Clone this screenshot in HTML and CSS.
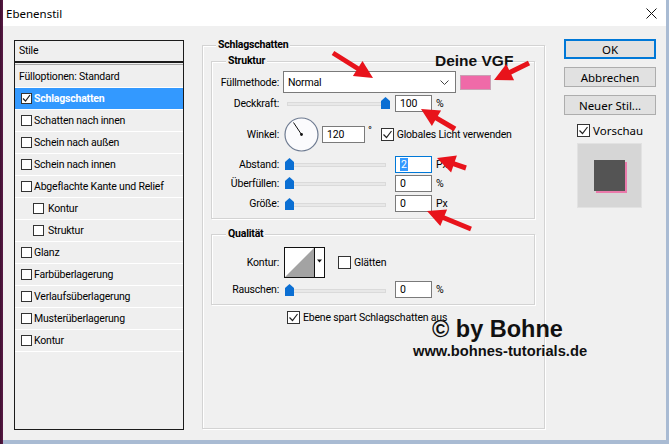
FILE: index.html
```html
<!DOCTYPE html>
<html lang="de">
<head>
  <meta charset="UTF-8" />
  <title>Ebenenstil</title>
  <link rel="stylesheet" href="styles.css">
</head>
<body>
  <div class="window">
    <div class="titlebar">
      <span class="title">Ebenenstil</span>
      <svg class="close" width="11" height="11" viewBox="0 0 11 11"><path d="M0.5 0.5L10.5 10.5M10.5 0.5L0.5 10.5" stroke="#111" stroke-width="1"/></svg>
    </div>

    <div class="dialog">
      <!-- left: list of layer styles -->
      <div class="styles-list">
        <div class="list-head">Stile</div>
        <div class="list-rule"></div>
        <div class="list-item plain">Fülloptionen: Standard</div>
        <div class="list-item active">
          <svg class="cb small" viewBox="0 0 11 11"><rect x=".5" y=".5" width="10" height="10" fill="#fff" stroke="#333"/><path d="M2 5.5l2.5 2.5 4.5-6" fill="none" stroke="#222" stroke-width="1.2"/></svg>
          Schlagschatten
        </div>
        <div class="list-item"><span class="box"></span>Schatten nach innen</div>
        <div class="list-item"><span class="box"></span>Schein nach außen</div>
        <div class="list-item"><span class="box"></span>Schein nach innen</div>
        <div class="list-item"><span class="box"></span>Abgeflachte Kante und Relief</div>
        <div class="list-item sub-item"><span class="box"></span>Kontur</div>
        <div class="list-item sub-item"><span class="box"></span>Struktur</div>
        <div class="list-item"><span class="box"></span>Glanz</div>
        <div class="list-item"><span class="box"></span>Farbüberlagerung</div>
        <div class="list-item"><span class="box"></span>Verlaufsüberlagerung</div>
        <div class="list-item"><span class="box"></span>Musterüberlagerung</div>
        <div class="list-item"><span class="box"></span>Kontur</div>
      </div>

      <!-- middle: drop shadow settings -->
      <div class="main">
        <div class="group outer">
          <div class="group-title outer-title">Schlagschatten</div>

          <div class="group sub">
            <div class="group-title">Struktur</div>
            <div class="rows">
              <div class="row h22">
                <span class="lbl">Füllmethode:</span>
                <div class="select">Normal
                  <svg class="chevron" width="9" height="5" viewBox="0 0 9 5"><path d="M0.5 0.5L4.5 4.5L8.5 0.5" fill="none" stroke="#444"/></svg>
                </div>
                <span class="swatch"></span>
              </div>
              <div class="row h20">
                <span class="lbl">Deckkraft:</span>
                <div class="slider">
                  <svg class="thumb" style="margin-left:96px" width="9" height="12" viewBox="0 0 9 12"><path d="M0 4L4.5 0L9 4V12H0Z" fill="#0b6fd3"/></svg>
                </div>
                <span class="num">100</span>
                <span class="unit">%</span>
              </div>
              <div class="row h42">
                <span class="lbl">Winkel:</span>
                <svg class="dial" width="35" height="35" viewBox="0 0 35 35">
                  <circle cx="17.5" cy="17.5" r="16.5" fill="#fbfbfd" stroke="#6f7c92" stroke-width="1.2"/>
                  <line x1="17.5" y1="17.5" x2="9.5" y2="5.5" stroke="#111" stroke-width="1"/>
                  <circle cx="17.5" cy="17.5" r="1.4" fill="#111"/>
                </svg>
                <span class="num wide">120</span>
                <span class="deg">°</span>
                <svg class="cb light-gap" viewBox="0 0 13 13"><rect x=".5" y=".5" width="12" height="12" fill="#fff" stroke="#333"/><path d="M2.5 6.5l3 3 5-6.5" fill="none" stroke="#222" stroke-width="1.2"/></svg>
                <span class="cb-text">Globales Licht verwenden</span>
              </div>
              <div class="row h18">
                <span class="lbl">Abstand:</span>
                <div class="slider">
                  <svg class="thumb" style="margin-left:0" width="9" height="12" viewBox="0 0 9 12"><path d="M0 4L4.5 0L9 4V12H0Z" fill="#0b6fd3"/></svg>
                </div>
                <span class="num focus"><span class="sel">2</span></span>
                <span class="unit">Px</span>
              </div>
              <div class="row h20">
                <span class="lbl">Überfüllen:</span>
                <div class="slider">
                  <svg class="thumb" style="margin-left:0" width="9" height="12" viewBox="0 0 9 12"><path d="M0 4L4.5 0L9 4V12H0Z" fill="#0b6fd3"/></svg>
                </div>
                <span class="num">0</span>
                <span class="unit">%</span>
              </div>
              <div class="row h21">
                <span class="lbl">Größe:</span>
                <div class="slider">
                  <svg class="thumb" style="margin-left:0" width="9" height="12" viewBox="0 0 9 12"><path d="M0 4L4.5 0L9 4V12H0Z" fill="#0b6fd3"/></svg>
                </div>
                <span class="num">0</span>
                <span class="unit">Px</span>
              </div>
            </div>
          </div>

          <div class="group sub quality">
            <div class="group-title">Qualität</div>
            <div class="rows q-rows">
              <div class="row h34">
                <span class="lbl">Kontur:</span>
                <svg class="contour" width="41" height="31" viewBox="0 0 41 31">
                  <rect x=".5" y=".5" width="40" height="30" fill="#fff" stroke="#111"/>
                  <path d="M1 30L30 1V30Z" fill="#a3a3a3"/>
                  <line x1="30.5" y1="1" x2="30.5" y2="30" stroke="#111"/>
                  <path d="M33 12.5H38L35.5 15.5Z" fill="#111"/>
                </svg>
                <svg class="cb glatt" viewBox="0 0 13 13"><rect x=".5" y=".5" width="12" height="12" fill="#fff" stroke="#333"/></svg>
                <span class="cb-text">Glätten</span>
              </div>
              <div class="row h21">
                <span class="lbl">Rauschen:</span>
                <div class="slider">
                  <svg class="thumb" style="margin-left:0" width="9" height="12" viewBox="0 0 9 12"><path d="M0 4L4.5 0L9 4V12H0Z" fill="#0b6fd3"/></svg>
                </div>
                <span class="num">0</span>
                <span class="unit">%</span>
              </div>
            </div>
          </div>

          <div class="row knock">
            <svg class="cb" viewBox="0 0 13 13"><rect x=".5" y=".5" width="12" height="12" fill="#fff" stroke="#333"/><path d="M2.5 6.5l3 3 5-6.5" fill="none" stroke="#222" stroke-width="1.2"/></svg>
            <span class="cb-text">Ebene spart Schlagschatten aus</span>
          </div>
        </div>
      </div>

      <!-- right: buttons and preview -->
      <div class="buttons">
        <div class="btn default">OK</div>
        <div class="btn">Abbrechen</div>
        <div class="btn">Neuer Stil...</div>
        <div class="preview-check">
          <svg class="cb" viewBox="0 0 13 13"><rect x=".5" y=".5" width="12" height="12" fill="#fff" stroke="#333"/><path d="M2.5 6.5l3 3 5-6.5" fill="none" stroke="#222" stroke-width="1.2"/></svg>
          <span>Vorschau</span>
        </div>
        <div class="preview"><div class="preview-square"></div></div>
      </div>
    </div>
  </div>

  <!-- notes and arrows drawn over the dialog -->
  <div class="note note-vgf">Deine VGF</div>
  <div class="note note-by">© by Bohne</div>
  <div class="note note-url">www.bohnes-tutorials.de</div>

  <svg class="arrows" width="669" height="444" viewBox="0 0 669 444">
    <g fill="#e8131b">
      <polygon points="331.7,55.1 356.4,70.6 352.9,76.1 373,78 362.5,60.9 359,66.4 334.3,50.9"/>
      <polygon points="527.9,60.8 509.1,69.9 506.3,64 494,80 514.1,80.2 511.3,74.4 530.1,65.3"/>
      <polygon points="456.3,126.8 437.8,116 441.1,110.4 421,109 431.9,125.9 435.2,120.3 453.7,131.2"/>
      <polygon points="466.8,165.6 454.8,161.5 456.9,155.4 437,158 451.1,172.4 453.2,166.3 465.2,170.4"/>
      <polygon points="471.9,226.7 444.6,215.5 447.1,209.5 427,211 440.3,226.1 442.8,220.1 470.1,231.3"/>
    </g>
  </svg>
</body>
</html>
```

FILE: styles.css
```css
body {
  margin: 0;
  width: 669px;
  height: 444px;
  overflow: hidden;
  position: relative;
  background: linear-gradient(to right, #3e1030 0, #5a1a45 3px, #a9bbd3 3px);
  font-family: Roboto, "Liberation Sans", sans-serif;
  font-size: 10.5px;
  letter-spacing: -0.2px;
  color: #000;
}

.window {
  margin-left: 3px;
  width: 663px;
  height: 440px;
  background: #f0f0f0;
}

.titlebar {
  height: 26px;
  background: #fff;
  display: flex;
  align-items: center;
  justify-content: space-between;
  padding: 0 9px 0 3px;
}

.title {
  font-family: "Noto Sans", sans-serif;
  font-size: 11.5px;
  letter-spacing: 0;
}

.dialog {
  display: flex;
  align-items: flex-start;
  padding: 14px 0 0 11px;
}

/* style list */
.styles-list {
  width: 170px;
  height: 390px;
  box-sizing: border-box;
  border: 1px solid #1b1b1b;
  background: #efefef;
}

.list-head {
  height: 20px;
  line-height: 20px;
  padding-left: 4px;
  border-bottom: 2px solid #1b1b1b;
}

.list-rule {
  margin: 1px 0;
  border-top: 1px solid #a8a8a8;
}

.list-item {
  height: 21px;
  border-bottom: 1px solid #fff;
  display: flex;
  align-items: center;
  gap: 2px;
  padding-left: 6px;
}

.list-item.plain {
  padding-left: 4px;
}

.list-item.sub-item {
  padding-left: 18px;
  gap: 4px;
}

.list-item.active {
  background: #3399ff;
  color: #fff;
  font-weight: bold;
}

.box {
  width: 11px;
  height: 11px;
  box-sizing: border-box;
  border: 1px solid #333;
  background: #fff;
  flex: none;
}

.cb {
  width: 13px;
  height: 13px;
  flex: none;
  display: block;
}

.cb.small {
  width: 11px;
  height: 11px;
}

.cb-text {
  margin-left: 3px;
}

/* group boxes */
.main {
  margin: 5px 0 0 18px;
}

.group {
  border: 1px solid #d3d3d3;
  box-shadow: inset 1px 1px 0 #fff, 1px 1px 0 #fff;
}

.group-title {
  width: max-content;
  height: 14px;
  line-height: 14px;
  margin: -8px 0 0 14px;
  padding: 0 2px;
  font-weight: bold;
  background: #f0f0f0;
}

.outer {
  width: 343px;
  height: 384px;
  box-sizing: border-box;
  padding: 0 9px 0 8px;
}

.outer-title {
  margin-left: 5px;
}

.sub {
  margin-top: 9px;
  padding-bottom: 4px;
}

.sub.quality {
  margin-top: 15px;
}

.rows {
  margin-top: 3px;
}

.q-rows {
  margin-top: 4px;
}

.row {
  display: flex;
  align-items: center;
}

.h18 { height: 18px; }
.h20 { height: 20px; }
.h21 { height: 21px; }
.h22 { height: 22px; }
.h34 { height: 34px; }
.h42 { height: 42px; }

.lbl {
  width: 67px;
  flex: none;
  text-align: right;
}

.select {
  margin-left: 4px;
  width: 173px;
  height: 22px;
  box-sizing: border-box;
  border: 1px solid #7a7a7a;
  background: #fff;
  display: flex;
  align-items: center;
  padding-left: 4px;
}

.chevron {
  margin: 1px 6px 0 auto;
}

.swatch {
  margin-left: 4px;
  width: 31px;
  height: 15px;
  box-sizing: border-box;
  background: #ef6aa8;
  border: 1px solid #c9a0b4;
}

.slider {
  margin-left: 6px;
  width: 105px;
  height: 12px;
  position: relative;
  flex: none;
}

.slider::before {
  content: "";
  position: absolute;
  left: 2px;
  right: 4px;
  top: 5px;
  height: 2px;
  background: #e8e8e8;
  border: 1px solid #dadada;
}

.thumb {
  display: block;
  position: relative;
}

.num {
  margin-left: 5px;
  width: 37px;
  height: 17px;
  box-sizing: border-box;
  border: 1px solid #7a7a7a;
  background: #fff;
  padding-left: 4px;
  line-height: 15px;
  flex: none;
}

.num.wide {
  margin-left: 3px;
  width: 43px;
}

.num.focus {
  border-color: #0078d7;
}

.sel {
  background: #3399ff;
  color: #fff;
  padding: 0 1px;
}

.unit {
  margin-left: 4px;
}

.dial {
  margin-left: 5px;
  flex: none;
}

.deg {
  margin: -7px 0 0 3px;
}

.light-gap {
  margin-left: 9px;
}

.contour {
  margin-left: 5px;
  flex: none;
}

.glatt {
  margin-left: 13px;
}

.knock {
  height: 24px;
  padding-left: 76px;
}

/* buttons column */
.buttons {
  margin: -1px 0 0 19px;
  width: 92px;
  display: flex;
  flex-direction: column;
  gap: 8px;
  font-family: "Noto Sans", sans-serif;
  font-size: 11.5px;
  letter-spacing: 0;
}

.btn {
  height: 20px;
  box-sizing: border-box;
  border: 1px solid #adadad;
  background: #e1e1e1;
  display: flex;
  align-items: center;
  justify-content: center;
}

.btn.default {
  border-color: #0078d7;
  box-shadow: inset 0 0 0 1px #0078d7;
}

.preview-check {
  margin-top: -2px;
  height: 18px;
  padding-left: 13px;
  display: flex;
  align-items: center;
  gap: 3px;
}

.preview {
  margin: -4px 0 0 13px;
  width: 65px;
  height: 65px;
  box-sizing: border-box;
  background: #d6d6d6;
  border: 1px solid #e2e2e2;
  display: flex;
  align-items: center;
  justify-content: center;
}

.preview-square {
  width: 31px;
  height: 31px;
  background: #545454;
  box-shadow: 2px 2px 0 #ea7aab;
}

/* overlay notes */
.note {
  position: absolute;
  font-family: "Liberation Sans", Arial, sans-serif;
  font-weight: bold;
  color: #111;
  white-space: nowrap;
  letter-spacing: 0;
}

.note-vgf {
  left: 435px;
  top: 53px;
  font-size: 15.5px;
  line-height: 15px;
}

.note-by {
  left: 432px;
  top: 318px;
  font-size: 23.5px;
  line-height: 23px;
}

.note-url {
  left: 413px;
  top: 344px;
  font-size: 14.7px;
  line-height: 15px;
}

.arrows {
  position: absolute;
  left: 0;
  top: 0;
  pointer-events: none;
}
```
